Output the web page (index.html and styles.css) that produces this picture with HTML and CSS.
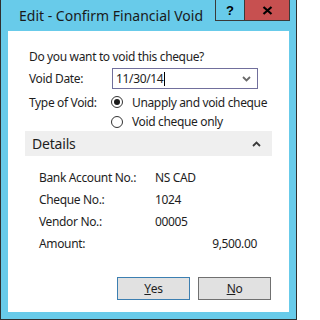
FILE: index.html
```html
<!DOCTYPE html>
<html>
<head>
<meta charset="utf-8">
<link rel="stylesheet" href="styles.css">
</head>
<body>
<div class="window">
  <div class="titlebar">
    <div class="title">Edit - Confirm Financial Void</div>
    <div class="caption-buttons">
      <div class="cap-btn help">?</div>
      <div class="cap-btn close">
        <svg width="11" height="9" viewBox="0 0 11 9"><path d="M1.5 1 L9.5 8 M9.5 1 L1.5 8" stroke="#000" stroke-width="2.2" fill="none"/></svg>
      </div>
    </div>
  </div>
  <div class="client">
    <div class="form">
      <div class="question">Do you want to void this cheque?</div>
      <div class="field-row">
        <div class="label">Void Date:</div>
        <div class="input">
          <span class="input-text">11/30/14</span><span class="caret"></span>
          <svg class="dropdown" width="9" height="6" viewBox="0 0 9 6"><path d="M1 1 L4.5 4.5 L8 1" stroke="#6a6a6a" stroke-width="1.8" fill="none"/></svg>
        </div>
      </div>
      <div class="field-row radio-row">
        <div class="label">Type of Void:</div>
        <div class="radio-opt"><span class="radio checked"></span>Unapply and void cheque</div>
      </div>
      <div class="field-row radio-row second">
        <div class="label"></div>
        <div class="radio-opt"><span class="radio"></span>Void cheque only</div>
      </div>
    </div>
    <div class="details-header">
      <span class="details-title">Details</span>
      <svg class="collapse" width="9" height="6" viewBox="0 0 9 6"><path d="M1 5 L4.5 1.5 L8 5" stroke="#3a3a3a" stroke-width="1.8" fill="none"/></svg>
    </div>
    <div class="details">
      <div class="drow"><span class="dlabel">Bank Account No.:</span><span class="dval">NS CAD</span></div>
      <div class="drow"><span class="dlabel">Cheque No.:</span><span class="dval">1024</span></div>
      <div class="drow"><span class="dlabel">Vendor No.:</span><span class="dval">00005</span></div>
      <div class="drow"><span class="dlabel">Amount:</span><span class="dval num">9,500.00</span></div>
    </div>
    <div class="buttons">
      <div class="btn default"><span class="ul">Y</span>es</div>
      <div class="btn"><span class="ul">N</span>o</div>
    </div>
  </div>
</div>
</body>
</html>
```
FILE: styles.css
```css
html, body {
  margin: 0;
  padding: 0;
  background: #ffffff;
}
body {
  font-family: "Noto Sans", "Open Sans", sans-serif;
  color: #1e1e1e;
}
.window {
  width: 297px;
  height: 320px;
  box-sizing: border-box;
  background: #68cbea;
  border-left: 1px solid #2f2f2f;
  border-right: 1px solid #2f2f2f;
  border-bottom: 1px solid #2f2f2f;
  display: flex;
  flex-direction: column;
  padding: 0 7px 7px 7px;
}
.titlebar {
  height: 31px;
  display: flex;
  justify-content: space-between;
  align-items: flex-start;
}
.title {
  font-size: 14px;
  line-height: 18px;
  margin-top: 7px;
  margin-left: 11px;
  color: #1a1a1a;
  white-space: nowrap;
}
.caption-buttons {
  display: flex;
  margin-right: -1px;
}
.cap-btn {
  height: 21px;
  box-sizing: border-box;
  border: 1px solid #3a3a3a;
  border-top: none;
  display: flex;
  align-items: center;
  justify-content: center;
  font-family: "Liberation Sans", Arial, sans-serif;
  font-weight: bold;
  font-size: 13px;
  color: #000;
}
.help {
  width: 29px;
  background: #68cbea;
  border-right: none;
}
.close {
  width: 46px;
  background: #c75050;
}
.client {
  flex: 1;
  background: #ffffff;
  display: flex;
  flex-direction: column;
  padding: 0 17px;
  font-size: 12px;
  letter-spacing: -0.35px;
  white-space: nowrap;
}
.form {
  padding-left: 4px;
  padding-top: 17px;
}
.question {
  height: 18px;
  line-height: 18px;
  margin-bottom: 2px;
}
.field-row {
  display: flex;
  align-items: center;
}
.label {
  width: 83px;
  flex: none;
}
.input {
  width: 146px;
  height: 21px;
  box-sizing: border-box;
  border: 1px solid #716f9c;
  display: flex;
  align-items: center;
  padding-left: 3px;
}
.input-text {
  line-height: 16px;
}
.caret {
  width: 1px;
  height: 14px;
  background: #000;
  margin-left: 1px;
}
.dropdown {
  margin-left: auto;
  margin-right: 6px;
}
.radio-row {
  height: 20px;
  margin-top: 3px;
}
.radio-row.second {
  margin-top: 0;
  height: 19px;
}
.radio-opt {
  display: flex;
  align-items: center;
  flex: none;
}
.radio {
  width: 12px;
  height: 12px;
  box-sizing: border-box;
  border: 1px solid #333;
  border-radius: 50%;
  margin-left: -1px;
  margin-right: 9px;
  display: flex;
  align-items: center;
  justify-content: center;
  flex: none;
}
.radio.checked::after {
  content: "";
  width: 6px;
  height: 6px;
  border-radius: 50%;
  background: #1a1a1a;
}
.details-header {
  height: 25px;
  background: #efefef;
  display: flex;
  align-items: center;
  justify-content: space-between;
  padding: 0 11px 0 7px;
}
.details-title {
  font-size: 14px;
  letter-spacing: -0.2px;
}
.details {
  padding: 10px 15px 0 14px;
}
.drow {
  height: 22px;
  display: flex;
  align-items: center;
}
.dlabel {
  width: 116px;
  flex: none;
}
.dval.num {
  margin-left: auto;
}
.buttons {
  display: flex;
  justify-content: flex-end;
  gap: 8px;
  margin-top: 23px;
  margin-right: 1px;
}
.btn {
  width: 73px;
  height: 23px;
  box-sizing: border-box;
  background: #e1e1e1;
  border: 1px solid #707070;
  display: flex;
  align-items: center;
  justify-content: center;
}
.btn.default {
  border-color: #3c7fb1;
}
.ul {
  text-decoration: underline;
}
```
